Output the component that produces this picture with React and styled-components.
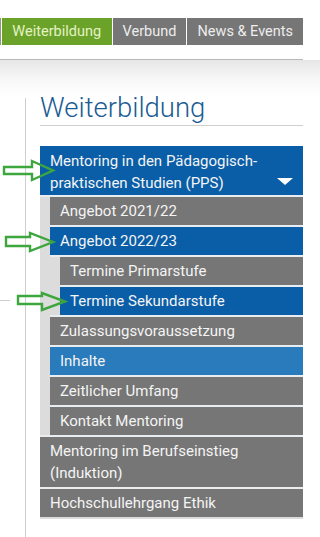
import React from "react";
import styled, { createGlobalStyle } from "styled-components";

const GlobalStyle = createGlobalStyle`
  html, body { margin: 0; padding: 0; background: #fff; }
  body { font-family: Roboto, "Noto Sans", "Liberation Sans", sans-serif; }
  * { box-sizing: border-box; }
  ul { list-style: none; margin: 0; padding: 0; }
`;

const Page = styled.div`
  position: relative;
  width: 320px;
  min-height: 537px;
  overflow: hidden;
`;

const Header = styled.header`
  width: 303px;
  height: 60px;
  padding-top: 18px;
  border-bottom: 1px solid #b9b9b9;
`;

const NavRow = styled.nav`
  display: flex;
  gap: 1px;
  height: 27px;
`;

const NavStub = styled.span`
  width: 1px;
  background: #8d9a7c;
`;

const Tab = styled.a`
  display: block;
  height: 27px;
  line-height: 27px;
  padding: 0 ${(p) => p.$pad || 10}px;
  font-size: 14.5px;
  color: ${(p) => (p.$active ? "#e4f3c4" : "#ededed")};
  background: ${(p) => (p.$active ? "#6ba22a" : "#767676")};
  white-space: nowrap;
`;

const Main = styled.main`
  background: linear-gradient(#e6e6e6 0px, #f6f6f6 18px, #ffffff 36px);
  padding-top: 33px;
  min-height: 477px;
`;

const Sidebar = styled.aside`
  position: relative;
  margin-left: 25px;
  width: 278px;
  padding-left: 15px;
  min-height: 444px;
  &::before {
    content: "";
    position: absolute;
    left: 0;
    top: 5px;
    bottom: 0;
    width: 1px;
    background: #cfcfcf;
  }
`;

const Heading = styled.h1`
  margin: 0;
  font-size: 27.5px;
  font-weight: 300;
  line-height: 30px;
  padding-bottom: 2px;
  color: #1b5c94;
  border-bottom: 1px solid #cfcfcf;
`;

const Menu = styled.ul`
  margin-top: 20px;
  border-bottom: 2px solid #dcdcdc;
`;

const SubMenu = styled.ul`
  background: #dcdcdc;
  padding-left: 10px;
`;

const bg = {
  gray: "#767676",
  blue: "#0a5ea7",
  light: "#2a7bbc",
};

const Item = styled.li`
  position: relative;
  & + & { border-top: 2px solid #eaedf0; }
`;

const ItemLink = styled.a`
  display: flex;
  align-items: flex-end;
  justify-content: space-between;
  gap: 10px;
  padding: ${(p) => (p.$head ? "4px 10px 1px" : "3px 10px")};
  font-size: 15px;
  line-height: 22px;
  color: #f4f4f4;
  background: ${(p) => bg[p.$tone || "gray"]};
`;

const Caret = styled.svg`
  flex: none;
  margin: 0 0 9px;
`;

const SubWrap = styled.div`
  border-top: 2px solid #eaedf0;
`;

const ArrowSvg = styled.svg`
  position: absolute;
  left: ${(p) => p.$left}px;
  top: ${(p) => p.$top}px;
  overflow: visible;
  pointer-events: none;
`;

const Tick = styled.span`
  position: absolute;
  left: 0;
  top: 300px;
  width: 10px;
  height: 1px;
  background: #cfcfcf;
`;

function Arrow({ left, top, w, h, s1, s2, head }) {
  const mid = h / 2;
  const pts = [
    [1, s1],
    [head, s1],
    [head, 1],
    [w - 1, mid],
    [head, h - 1],
    [head, s2],
    [1, s2],
  ]
    .map((p) => p.join(","))
    .join(" ");
  return (
    <ArrowSvg $left={left} $top={top} width={w} height={h} viewBox={`0 0 ${w} ${h}`}>
      <polygon
        points={pts}
        fill="none"
        stroke="#3da63d"
        strokeWidth="2.4"
        strokeLinejoin="miter"
      />
    </ArrowSvg>
  );
}

export default function App() {
  return (
    <Page>
      <GlobalStyle />
      <Header>
        <NavRow>
          <NavStub />
          <Tab $active $pad={10.5}>Weiterbildung</Tab>
          <Tab>Verbund</Tab>
          <Tab>News &amp; Events</Tab>
        </NavRow>
      </Header>
      <Main>
        <Sidebar>
          <Heading>Weiterbildung</Heading>
          <Menu>
            <Item>
              <ItemLink $head $tone="blue">
                <span>Mentoring in den Pädagogisch-praktischen Studien (PPS)</span>
                <Caret width="16" height="7" viewBox="0 0 16 7">
                  <polygon points="0,0 16,0 8,7" fill="#fff" />
                </Caret>
              </ItemLink>
              <Arrow left={-37} top={14} w={51} h={21} s1={7} s2={14} head={29} />
              <SubWrap>
                <SubMenu>
                  <Item>
                    <ItemLink>Angebot 2021/22</ItemLink>
                  </Item>
                  <Item>
                    <ItemLink $tone="blue">Angebot 2022/23</ItemLink>
                    <Arrow left={-45} top={5} w={49} h={20} s1={5} s2={14} head={25} />
                    <SubWrap>
                      <SubMenu>
                        <Item>
                          <ItemLink>Termine Primarstufe</ItemLink>
                        </Item>
                        <Item>
                          <ItemLink $tone="blue">Termine Sekundarstufe</ItemLink>
                          <Arrow left={-43} top={5} w={49} h={19} s1={4} s2={12} head={25} />
                        </Item>
                      </SubMenu>
                    </SubWrap>
                  </Item>
                  <Item>
                    <ItemLink>Zulassungsvoraussetzung</ItemLink>
                  </Item>
                  <Item>
                    <ItemLink $tone="light">Inhalte</ItemLink>
                  </Item>
                  <Item>
                    <ItemLink>Zeitlicher Umfang</ItemLink>
                  </Item>
                  <Item>
                    <ItemLink>Kontakt Mentoring</ItemLink>
                  </Item>
                </SubMenu>
              </SubWrap>
            </Item>
            <Item>
              <ItemLink>Mentoring im Berufseinstieg (Induktion)</ItemLink>
            </Item>
            <Item>
              <ItemLink>Hochschullehrgang Ethik</ItemLink>
            </Item>
          </Menu>
        </Sidebar>
      </Main>
      <Tick />
    </Page>
  );
}
